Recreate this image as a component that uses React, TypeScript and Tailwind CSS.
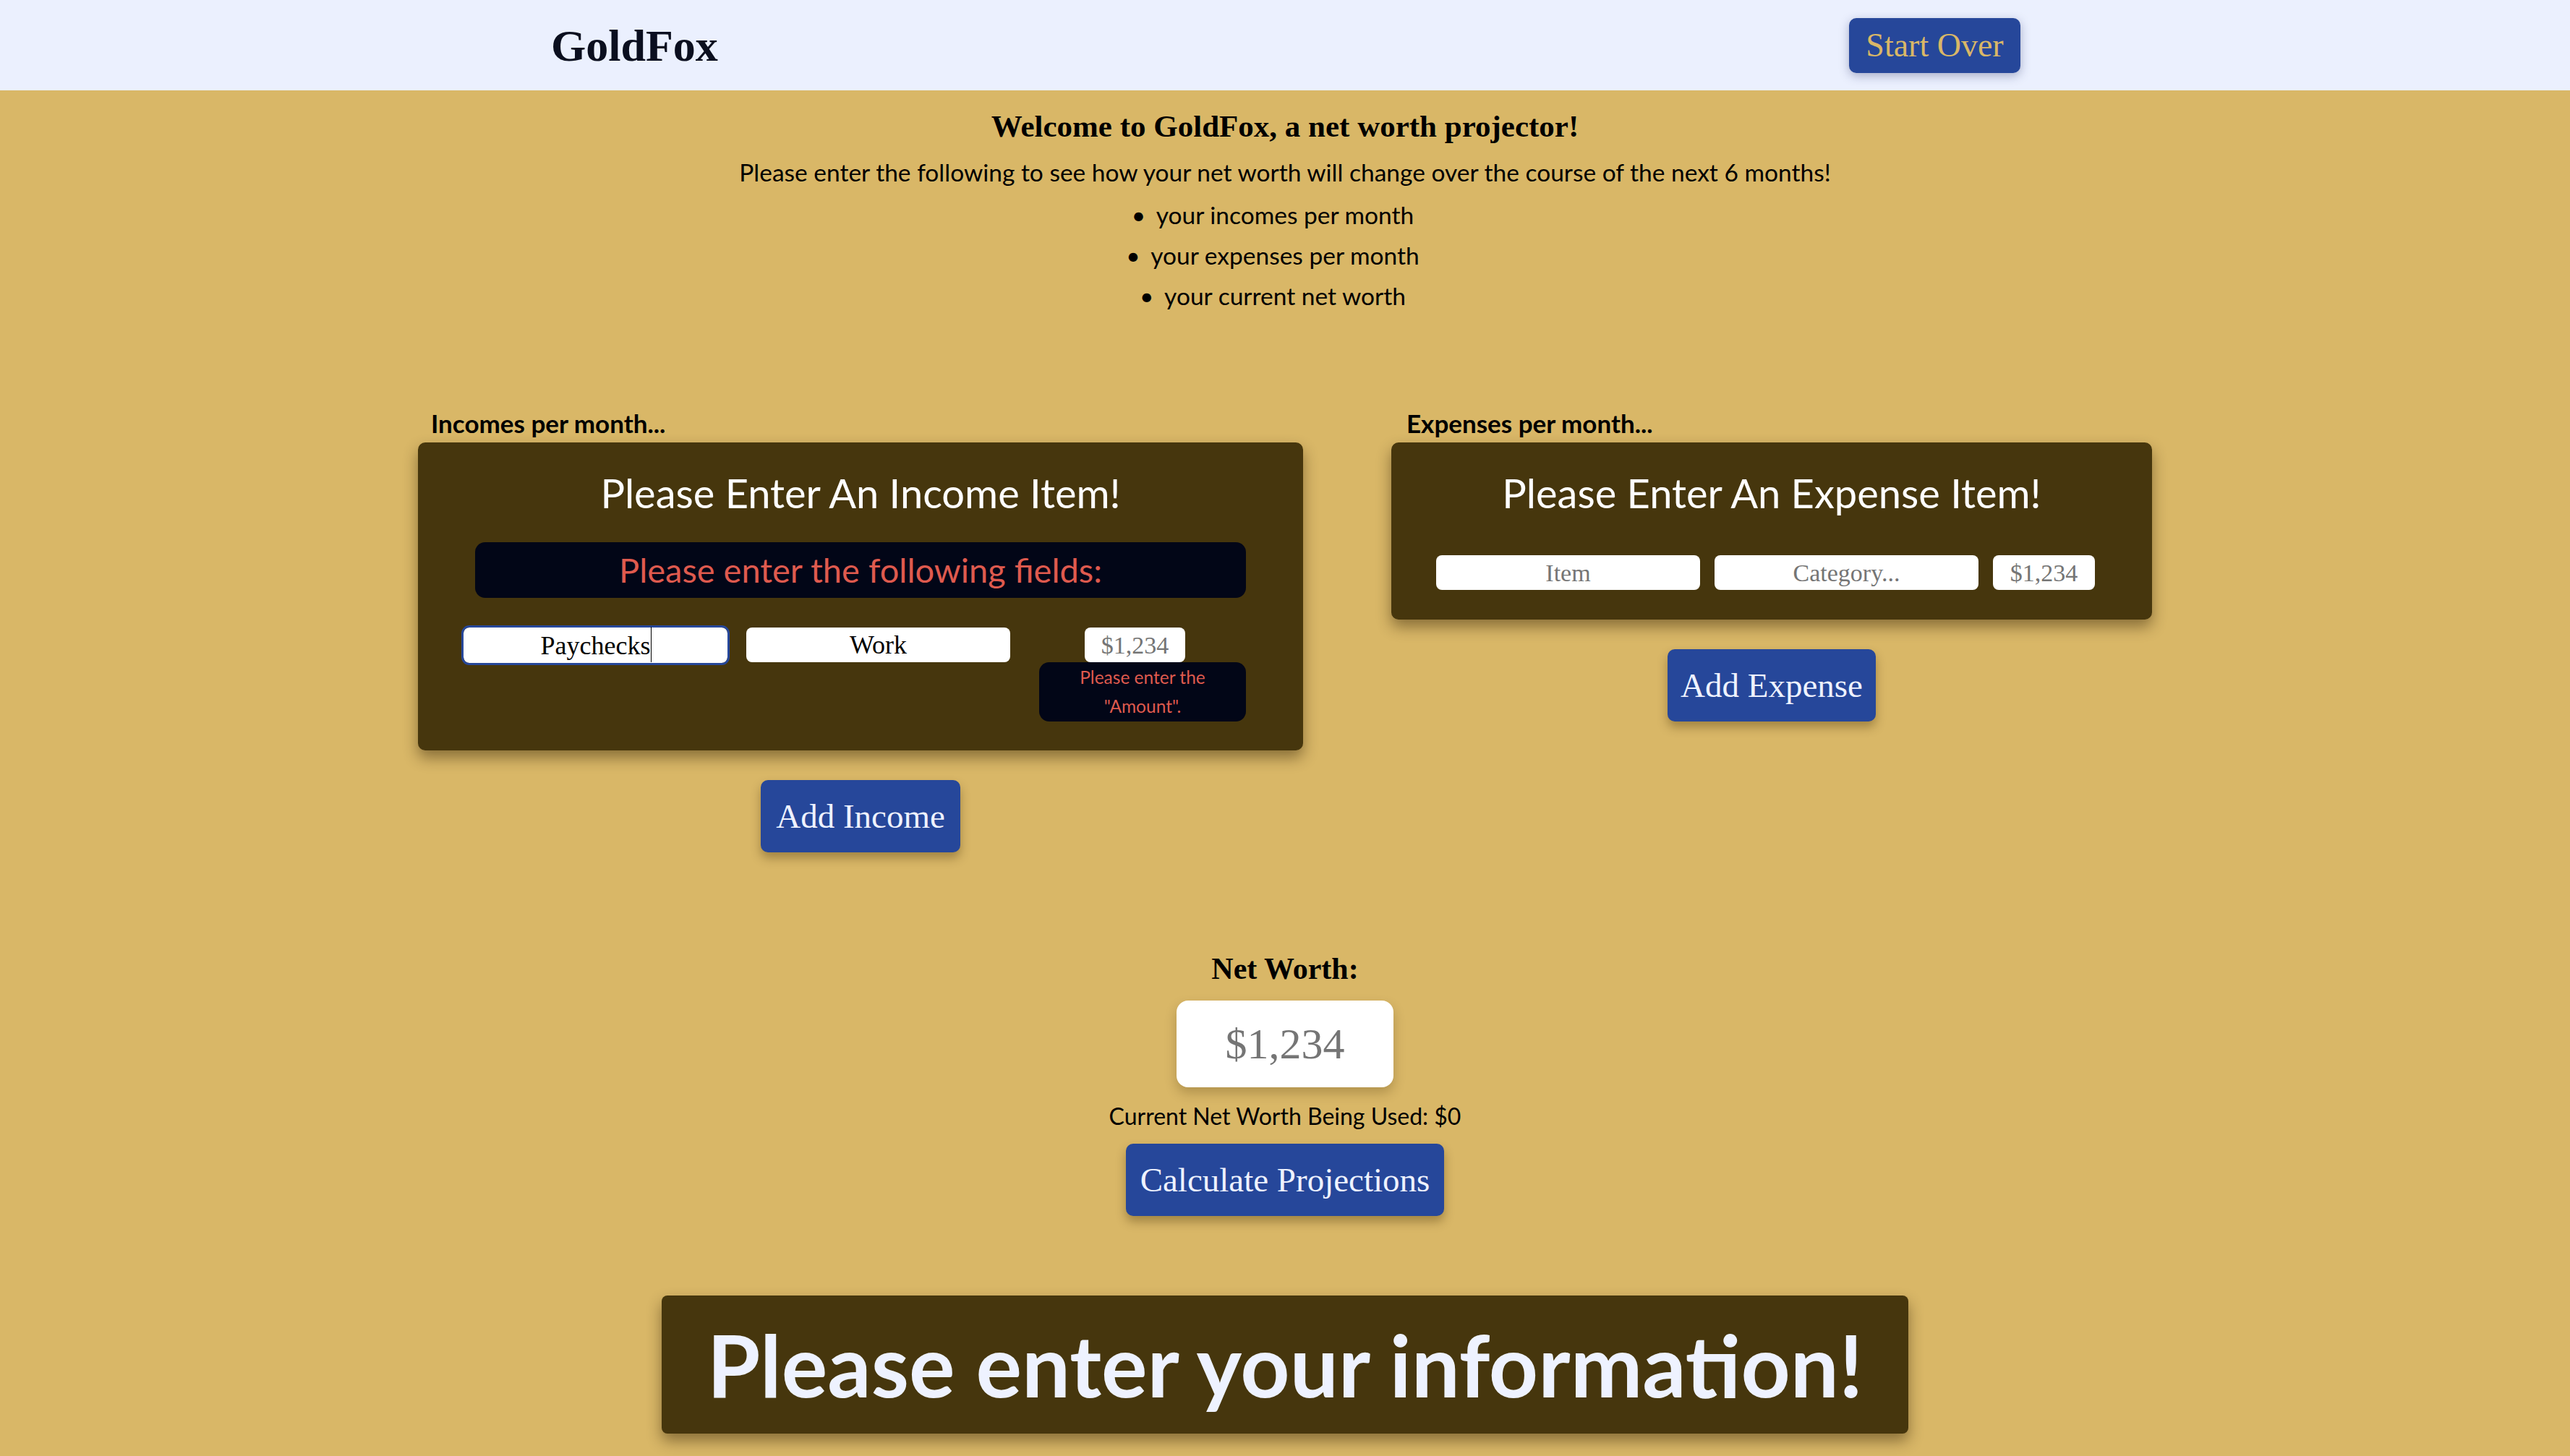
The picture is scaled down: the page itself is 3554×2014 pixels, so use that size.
import React from "react";

const serif = "font-['Liberation_Serif','Times_New_Roman',serif]";

function Btn({ children, className }: { children: React.ReactNode; className: string }) {
  return (
    <button
      className={`bg-[#26479a] text-[#eef2ff] text-[47px] leading-none rounded-[10px] shadow-[0_8px_14px_rgba(60,40,0,0.35)] flex items-center justify-center font-['Liberation_Serif',serif] ${className}`}
    >
      {children}
    </button>
  );
}

function Bullet({ children }: { children: React.ReactNode }) {
  return (
    <li className="leading-[56px] text-center">
      <span className="relative inline-block">
        <span className="absolute left-[-34px] top-0">•</span>
        {children}
      </span>
    </li>
  );
}

export default function App() {
  return (
    <div className="min-h-screen w-full bg-[#d9b767] font-['Lato',sans-serif] text-black">
      <header className="h-[125px] bg-[#ebf0fe] flex items-center justify-between pl-[762px] pr-[760px]">
        <h1 className={`${serif} font-bold text-[62px] leading-none text-[#0b0f1f]`}>GoldFox</h1>
        <button className={`${serif} w-[237px] h-[76px] rounded-[10px] bg-[#26479a] text-[#d9b767] text-[46px] leading-none shadow-[0_4px_14px_rgba(40,50,100,0.35)] flex items-center justify-center`}>
          Start Over
        </button>
      </header>

      <main className="flex flex-col items-center">
        <h2 className={`${serif} mt-[25px] font-bold text-[43px] leading-[50px]`}>
          Welcome to GoldFox, a net worth projector!
        </h2>
        <p className="mt-[14px] text-[33.5px] leading-[48px]">
          Please enter the following to see how your net worth will change over the course of the next 6 months!
        </p>
        <ul className="mt-[7px] list-none text-[33.5px]">
          <Bullet>your incomes per month</Bullet>
          <Bullet>your expenses per month</Bullet>
          <Bullet>your current net worth</Bullet>
        </ul>

        <div className="mt-[130px] flex items-start justify-center gap-[122px]">
          {/* Income column */}
          <div className="w-[1224px] flex flex-col">
            <div className="pl-[18px] text-[35px] font-bold leading-[36px] mb-[9px]">Incomes per month...</div>
            <div className="bg-[#46360d] rounded-[10px] shadow-[0_10px_20px_rgba(40,25,0,0.45)] pt-[40px] pb-[40px] flex flex-col">
              <div className="text-center text-white text-[56px] leading-[60px]">Please Enter An Income Item!</div>
              <div className="mt-[38px] mx-[79px] h-[77px] rounded-[14px] bg-[#020617] flex items-center justify-center text-[#df5a4e] text-[47px] leading-none">
                Please enter the following fields:
              </div>
              <div className="mt-[41px] flex items-start pl-[63px]">
                <div className={`${serif} w-[365px] h-[49px] bg-white rounded-[8px] outline outline-[3px] outline-[#26479a] flex items-center justify-center text-[36px] leading-none text-black`}>
                  <span className="relative">
                    Paychecks
                    <span className="absolute right-[-2px] top-[-8px] w-[1.5px] h-[49px] bg-black"></span>
                  </span>
                </div>
                <input
                  readOnly
                  defaultValue="Work"
                  className={`${serif} ml-[26px] w-[365px] h-[48px] bg-white rounded-[8px] text-center text-[36px] text-black outline-none`}
                />
                <div className="ml-[40px] w-[286px] flex flex-col items-start">
                  <input
                    readOnly
                    placeholder="$1,234"
                    className={`${serif} ml-[63px] w-[139px] h-[48px] bg-white rounded-[8px] text-center text-[34px] text-black placeholder:text-[#757575] outline-none`}
                  />
                  <div className="w-full h-[82px] rounded-[14px] bg-[#020617] flex flex-col items-center justify-center text-[#df5a4e] text-[24.5px] leading-[40px]">
                    <span>Please enter the</span>
                    <span>"Amount".</span>
                  </div>
                </div>
              </div>
            </div>
            <Btn className="mt-[41px] self-center w-[276px] h-[100px]">Add Income</Btn>
          </div>

          {/* Expense column */}
          <div className="w-[1052px] flex flex-col">
            <div className="pl-[21px] text-[35px] font-bold leading-[36px] mb-[9px]">Expenses per month...</div>
            <div className="bg-[#46360d] rounded-[10px] shadow-[0_10px_20px_rgba(40,25,0,0.45)] pt-[40px] pb-[41px] flex flex-col">
              <div className="text-center text-white text-[56px] leading-[60px]">Please Enter An Expense Item!</div>
              <div className="mt-[56px] flex items-start pl-[62px] gap-[20px]">
                <input
                  readOnly
                  placeholder="Item"
                  className={`${serif} w-[365px] h-[48px] bg-white rounded-[8px] text-center text-[34px] placeholder:text-[#757575] outline-none`}
                />
                <input
                  readOnly
                  placeholder="Category..."
                  className={`${serif} w-[365px] h-[48px] bg-white rounded-[8px] text-center text-[34px] placeholder:text-[#757575] outline-none`}
                />
                <input
                  readOnly
                  placeholder="$1,234"
                  className={`${serif} w-[141px] h-[48px] bg-white rounded-[8px] text-center text-[34px] placeholder:text-[#757575] outline-none`}
                />
              </div>
            </div>
            <Btn className="mt-[41px] self-center w-[288px] h-[100px]">Add Expense</Btn>
          </div>
        </div>

        <div className={`${serif} mt-[136px] font-bold text-[42px] leading-[50px]`}>Net Worth:</div>
        <input
          readOnly
          placeholder="$1,234"
          className={`${serif} mt-[19px] w-[300px] h-[120px] bg-white rounded-[16px] text-center text-[60px] placeholder:text-[#757575] outline-none shadow-[0_8px_16px_rgba(60,40,0,0.25)]`}
        />
        <div className="mt-[20px] text-[32px] leading-[40px]">Current Net Worth Being Used: $0</div>
        <Btn className="mt-[18px] w-[440px] h-[100px]">Calculate Projections</Btn>

        <div className="mt-[110px] w-[1724px] h-[191px] bg-[#46360d] rounded-[8px] shadow-[0_10px_20px_rgba(40,25,0,0.45)] flex items-center justify-center">
          <span className="text-[#eef2ff] font-bold text-[119px] leading-none">Please enter your information!</span>
        </div>
        <div className="h-[40px]"></div>
      </main>
    </div>
  );
}
